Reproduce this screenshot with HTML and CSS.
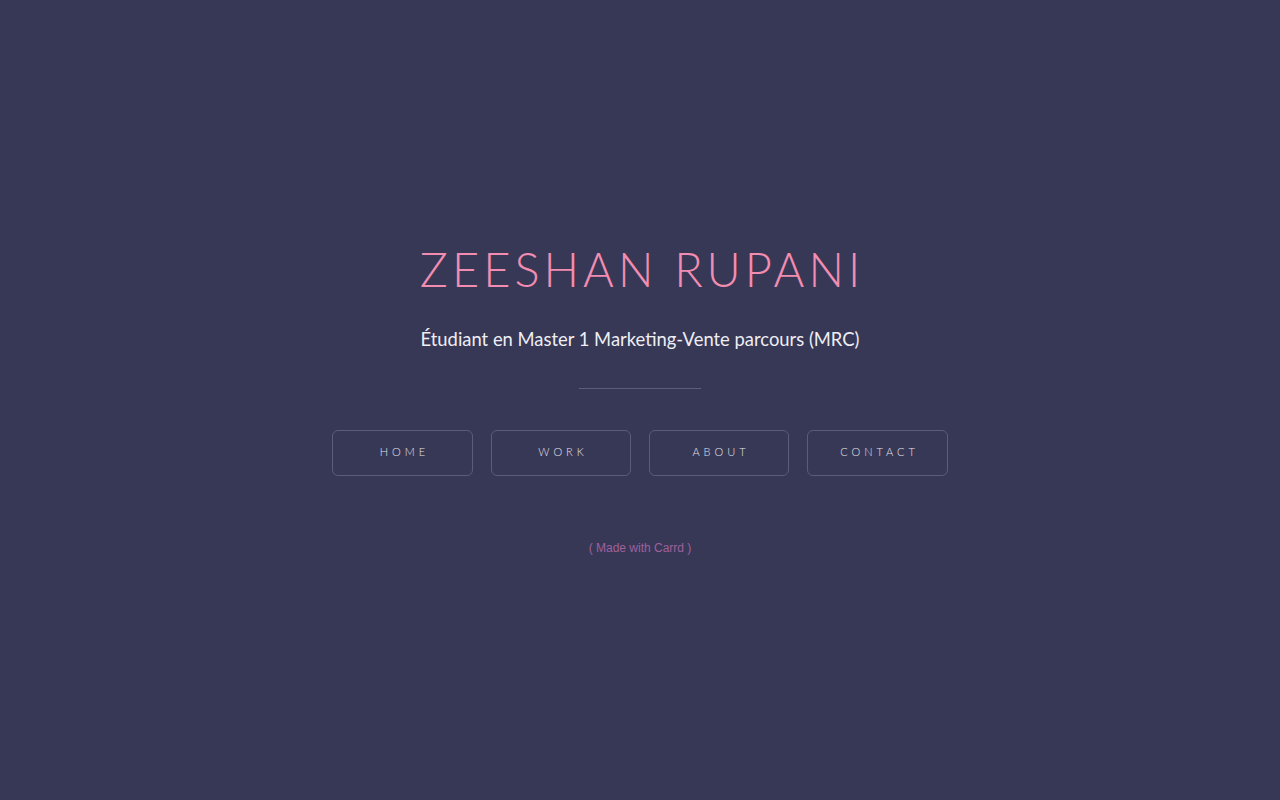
FILE: index.html
```html
<!DOCTYPE html>
<html lang="fr">
<head>
<meta charset="utf-8">
<title>Zeeshan Rupani</title>
<link rel="stylesheet" href="styles.css">
</head>
<body>
<main class="page">
  <section class="card">
    <h1 class="title">ZEESHAN RUPANI</h1>
    <p class="subtitle">Étudiant en Master 1 Marketing-Vente parcours (MRC)</p>
    <hr class="divider">
    <nav class="buttons">
      <a class="btn btn-wide" href="#">HOME</a>
      <a class="btn" href="#">WORK</a>
      <a class="btn" href="#">ABOUT</a>
      <a class="btn btn-wide" href="#">CONTACT</a>
    </nav>
  </section>
  <p class="credit">( Made with Carrd )</p>
</main>
</body>
</html>
```
FILE: styles.css
```css
html, body {
  margin: 0;
  padding: 0;
  height: 100%;
}
body {
  background: #373856;
  font-family: "Lato", "Noto Sans", sans-serif;
}
.page {
  height: 800px;
  display: flex;
  flex-direction: column;
  align-items: center;
  padding-top: 242px;
  box-sizing: border-box;
}
.card {
  display: flex;
  flex-direction: column;
  align-items: center;
}
.title {
  margin: 0;
  font-weight: 300;
  font-size: 47px;
  line-height: 54px;
  letter-spacing: 4px;
  margin-right: -4px;
  color: #f28db1;
}
.subtitle {
  margin: 30px 0 0;
  font-size: 18.4px;
  line-height: 26px;
  font-weight: 400;
  color: #eeeef4;
}
.divider {
  margin: 36px 0 0;
  width: 122px;
  border: 0;
  border-top: 1px solid #5d5e7d;
  height: 0;
}
.buttons {
  margin-top: 41px;
  display: flex;
  gap: 18px;
}
.btn {
  width: 140px;
  height: 46px;
  box-sizing: border-box;
  border: 1px solid #5b5c7c;
  border-radius: 6px;
  display: flex;
  align-items: center;
  justify-content: center;
  text-decoration: none;
  color: #e2e2ec;
  font-size: 11px;
  font-weight: 300;
  letter-spacing: 0.36em;
  padding-left: 0.36em;
  padding-bottom: 3px;
}
.btn-wide {
  width: 141px;
}
.credit {
  margin: 65px 0 0;
  font-family: "Liberation Sans", Arial, sans-serif;
  font-size: 12px;
  color: #a0609c;
}
```
